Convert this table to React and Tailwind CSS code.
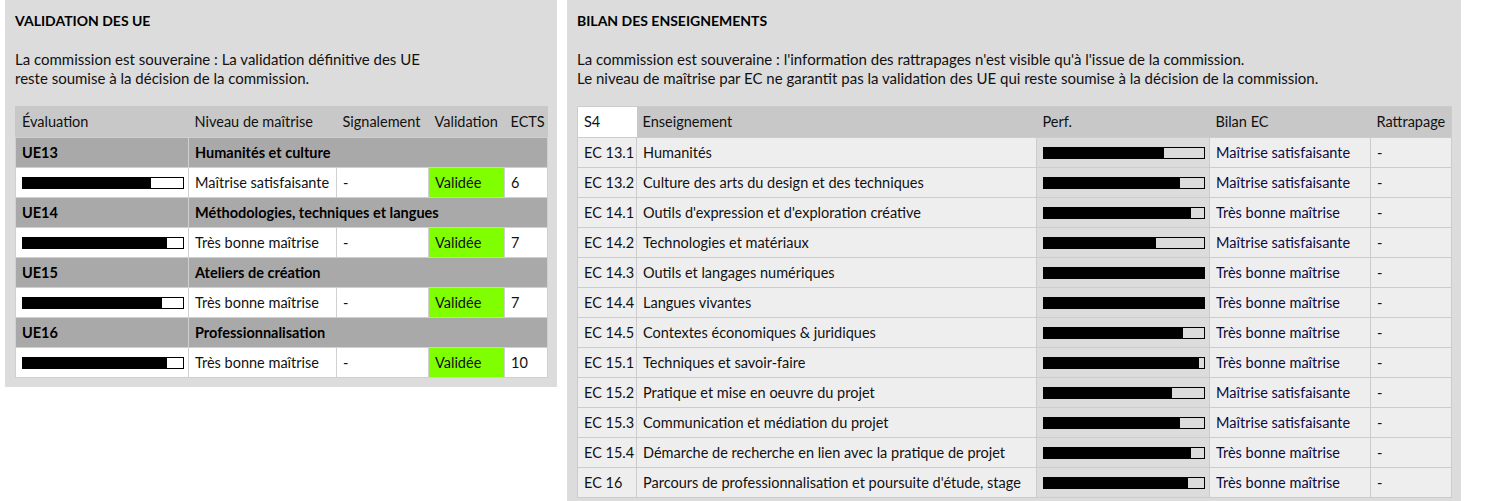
import React from 'react';

const ues = [
    { code: 'UE13', name: 'Humanités et culture', perf: 0.8, niveau: 'Maîtrise satisfaisante', ects: '6' },
    { code: 'UE14', name: 'Méthodologies, techniques et langues', perf: 0.9, niveau: 'Très bonne maîtrise', ects: '7' },
    { code: 'UE15', name: 'Ateliers de création', perf: 0.87, niveau: 'Très bonne maîtrise', ects: '7' },
    { code: 'UE16', name: 'Professionnalisation', perf: 0.9, niveau: 'Très bonne maîtrise', ects: '10' },
];

const ecs = [
    { code: 'EC 13.1', name: 'Humanités', perf: 0.75, bilan: 'Maîtrise satisfaisante' },
    { code: 'EC 13.2', name: 'Culture des arts du design et des techniques', perf: 0.85, bilan: 'Maîtrise satisfaisante' },
    { code: 'EC 14.1', name: "Outils d'expression et d'exploration créative", perf: 0.92, bilan: 'Très bonne maîtrise' },
    { code: 'EC 14.2', name: 'Technologies et matériaux', perf: 0.7, bilan: 'Maîtrise satisfaisante' },
    { code: 'EC 14.3', name: 'Outils et langages numériques', perf: 1, bilan: 'Très bonne maîtrise' },
    { code: 'EC 14.4', name: 'Langues vivantes', perf: 1, bilan: 'Très bonne maîtrise' },
    { code: 'EC 14.5', name: 'Contextes économiques & juridiques', perf: 0.87, bilan: 'Très bonne maîtrise' },
    { code: 'EC 15.1', name: 'Techniques et savoir-faire', perf: 0.97, bilan: 'Très bonne maîtrise' },
    { code: 'EC 15.2', name: 'Pratique et mise en oeuvre du projet', perf: 0.8, bilan: 'Maîtrise satisfaisante' },
    { code: 'EC 15.3', name: 'Communication et médiation du projet', perf: 0.85, bilan: 'Maîtrise satisfaisante' },
    { code: 'EC 15.4', name: 'Démarche de recherche en lien avec la pratique de projet', perf: 0.92, bilan: 'Très bonne maîtrise' },
    { code: 'EC 16', name: "Parcours de professionnalisation et poursuite d'étude, stage", perf: 0.9, bilan: 'Très bonne maîtrise' },
];

// Barre de performance (largeur calculée depuis les données)
function Bar({ value }) {
    return (
        <div className="w-[162px] h-[12px] border border-black">
            <div className="h-full bg-black" style={{ width: `${value * 100}%` }} />
        </div>
    );
}

export default function App() {
    const td = 'h-[30px] px-[6px] py-0 border border-[#d0d0d0] align-middle whitespace-nowrap';
    const tdR = 'h-[30px] px-[6px] py-0 border border-[#cccccc] align-middle whitespace-nowrap';

    return (
        <div className="flex items-start gap-[10px] pl-[5px] font-['Lato',sans-serif] text-[15px] text-[#111]">
            {/* Validation des UE */}
            <section className="w-[552px] bg-[#dcdcdc] px-[10px] pt-[10px] pb-[9px]">
                <h2 className="text-[14px] font-bold leading-[21px] text-black">VALIDATION DES UE</h2>
                <p className="mt-[19px] leading-[19px]">
                    La commission est souveraine : La validation définitive des UE<br />
                    reste soumise à la décision de la commission.
                </p>
                <table className="mt-[18px] w-full table-fixed border-collapse border border-[#c8c8c8] text-[14.5px]">
                    <colgroup>
                        <col className="w-[173px]" />
                        <col className="w-[148px]" />
                        <col className="w-[92px]" />
                        <col className="w-[76px]" />
                        <col className="w-[43px]" />
                    </colgroup>
                    <thead>
                        <tr className="bg-[#c8c8c8] text-left">
                            <th className="h-[31px] px-[6px] font-normal">Évaluation</th>
                            <th className="px-[6px] font-normal whitespace-nowrap">Niveau de maîtrise</th>
                            <th className="px-[6px] font-normal whitespace-nowrap">Signalement</th>
                            <th className="px-[6px] font-normal">Validation</th>
                            <th className="px-[6px] font-normal">ECTS</th>
                        </tr>
                    </thead>
                    <tbody>
                        {ues.map((ue) => (
                            <React.Fragment key={ue.code}>
                                <tr className="bg-[#a9a9a9] font-bold text-black">
                                    <td className={td}>{ue.code}</td>
                                    <td className={td} colSpan={4}>{ue.name}</td>
                                </tr>
                                <tr className="bg-white">
                                    <td className={td}><Bar value={ue.perf} /></td>
                                    <td className={td}>{ue.niveau}</td>
                                    <td className={td}>-</td>
                                    <td className={`${td} bg-[#80ff00]`}>Validée</td>
                                    <td className={td}>{ue.ects}</td>
                                </tr>
                            </React.Fragment>
                        ))}
                    </tbody>
                </table>
            </section>

            {/* Bilan des enseignements */}
            <section className="w-[894px] bg-[#dcdcdc] px-[10px] pt-[10px] pb-[10px]">
                <h2 className="text-[14px] font-bold leading-[21px] text-black">BILAN DES ENSEIGNEMENTS</h2>
                <p className="mt-[19px] leading-[19px]">
                    La commission est souveraine : l'information des rattrapages n'est visible qu'à l'issue de la commission.<br />
                    Le niveau de maîtrise par EC ne garantit pas la validation des UE qui reste soumise à la décision de la commission.
                </p>
                <table className="mt-[18px] w-full table-fixed border-collapse border border-[#cccccc] text-[14.5px]">
                    <colgroup>
                        <col className="w-[59px]" />
                        <col className="w-[400px]" />
                        <col className="w-[173px]" />
                        <col className="w-[161px]" />
                        <col className="w-[81px]" />
                    </colgroup>
                    <thead>
                        <tr className="bg-[#c8c8c8] text-left">
                            <th className="h-[31px] px-[6px] font-normal bg-white">S4</th>
                            <th className="px-[6px] font-normal">Enseignement</th>
                            <th className="px-[6px] font-normal">Perf.</th>
                            <th className="px-[6px] font-normal">Bilan EC</th>
                            <th className="px-[6px] font-normal">Rattrapage</th>
                        </tr>
                    </thead>
                    <tbody>
                        {ecs.map((ec) => (
                            <tr key={ec.code} className="bg-[#eeeeee]">
                                <td className={tdR}>{ec.code}</td>
                                <td className={tdR}>{ec.name}</td>
                                <td className={`${tdR} bg-[#dcdcdc]`}><Bar value={ec.perf} /></td>
                                <td className={`${tdR} text-[#0b0b40]`}>{ec.bilan}</td>
                                <td className={tdR}>-</td>
                            </tr>
                        ))}
                    </tbody>
                </table>
            </section>
        </div>
    );
}
